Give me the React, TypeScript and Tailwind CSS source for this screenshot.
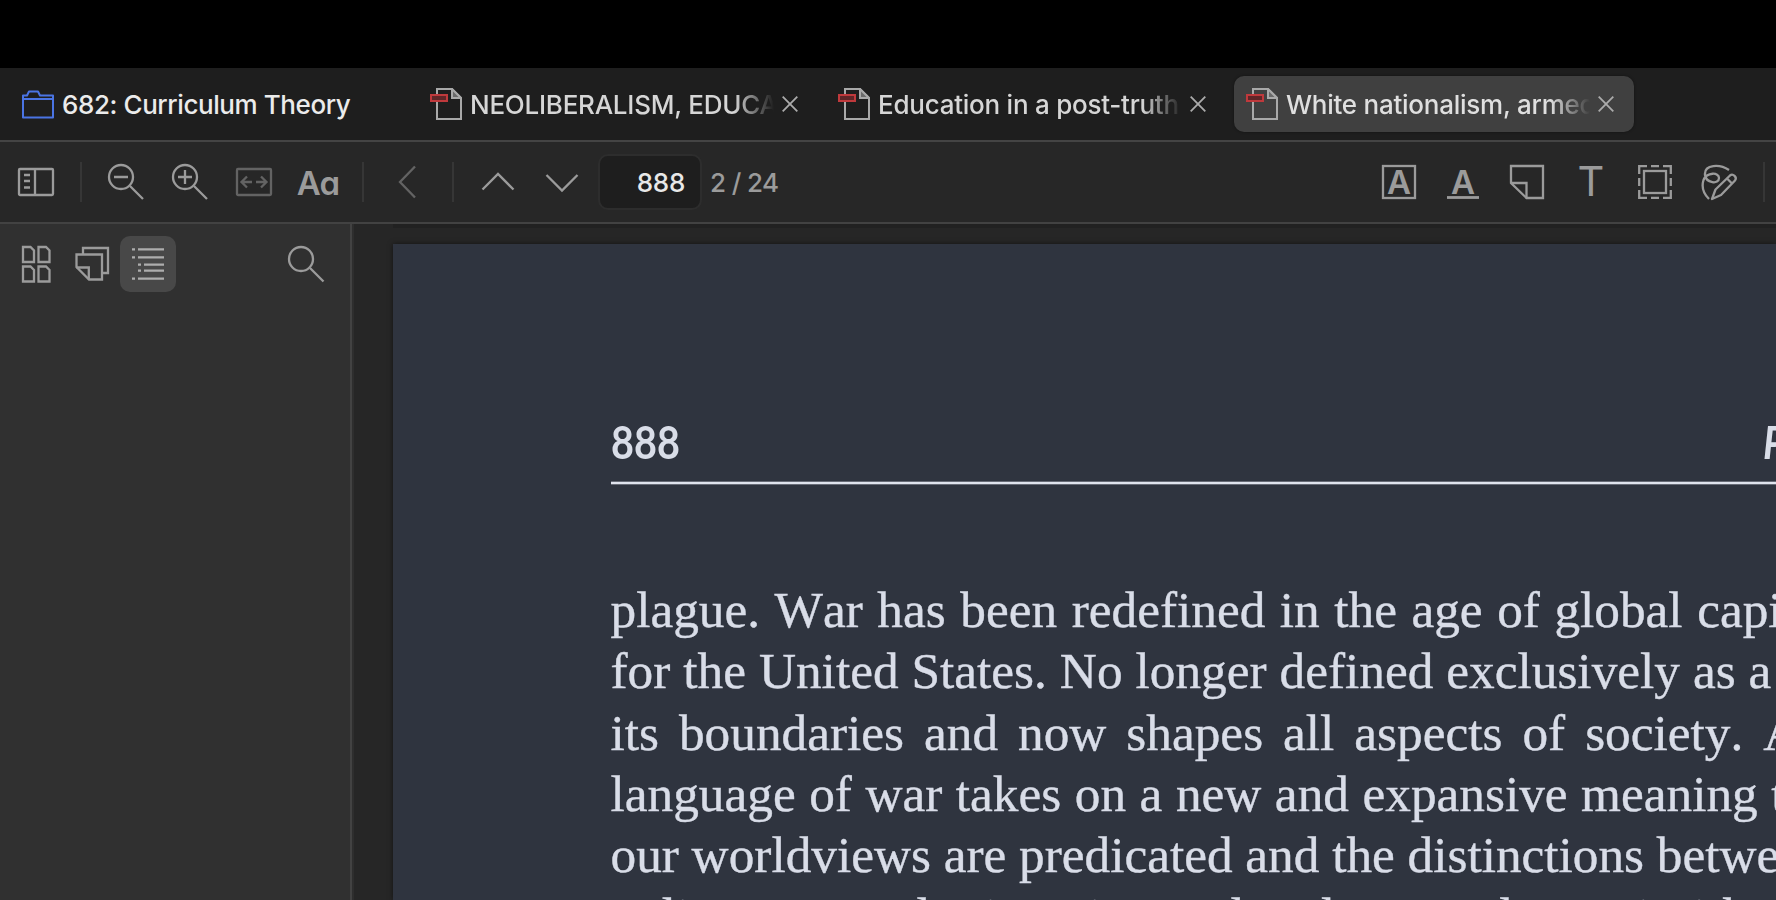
import type { ReactNode } from 'react';

interface IconProps {
  children: ReactNode;
  className?: string;
}

function Icon({ children, className = 'text-[#9b9b9b]' }: IconProps) {
  return (
    <svg
      className={`w-10 h-10 shrink-0 ${className}`}
      viewBox="0 0 40 40"
      fill="none"
      stroke="currentColor"
      strokeWidth="2.3"
    >
      {children}
    </svg>
  );
}

function ToolButton({ label, active, children }: { label: string; active?: boolean; children: ReactNode }) {
  return (
    <button
      aria-label={label}
      className={`w-14 h-14 shrink-0 flex items-center justify-center rounded-[10px] ${active ? 'bg-[#484848]' : ''}`}
    >
      {children}
    </button>
  );
}

function Divider() {
  return <div className="w-0.5 h-10 shrink-0 bg-[#363636]" />;
}

function PdfIcon() {
  return (
    <svg className="w-8 h-8 shrink-0" viewBox="0 0 32 32" fill="none" strokeWidth="2">
      <path d="M7 1h15l9 9v21H7z" stroke="#a9a9a9" />
      <path d="M22 1v9h9z" stroke="#a9a9a9" fill="#6a6a6a" />
      <rect x="1" y="7" width="16" height="6" stroke="#bf393c" fill="#5f2628" />
    </svg>
  );
}

function Tab({ title, active }: { title: string; active?: boolean }) {
  return (
    <div
      className={`w-[400px] h-14 shrink-0 flex items-center pl-3 pr-5 rounded-[10px] ${
        active ? 'bg-[#404040] text-[#dfdfdf] shadow-[0_0_3px_rgba(0,0,0,0.4)]' : 'text-[#d6d6d6]'
      }`}
    >
      <PdfIcon />
      <span className="ml-2 pt-0.5 w-[305px] overflow-hidden whitespace-nowrap tracking-[-0.25px] font-[450] [mask-image:linear-gradient(to_right,black_264px,transparent_304px)]">
        {title}
      </span>
      <svg className="ml-[7px] w-4 h-4 shrink-0" viewBox="0 0 16 16" stroke="#ababab" strokeWidth="1.8">
        <path d="M.7.7l14.6 14.6M15.3.7L.7 15.3" />
      </svg>
    </div>
  );
}

const tabs = [
  { title: 'NEOLIBERALISM, EDUCATION', active: false },
  { title: 'Education in a post-truth world', active: false },
  { title: 'White nationalism, armed culture', active: true },
];

// every line is justified on its own, so each one carries its word spacing
const lines = [
  { text: 'plague. War has been redefined in the age of global capitalism', spacing: '[word-spacing:1.7px]' },
  { text: 'for the United States. No longer defined exclusively as a', spacing: '[word-spacing:0.15px]' },
  { text: 'its boundaries and now shapes all aspects of society. As', spacing: '[word-spacing:7.15px]' },
  { text: 'language of war takes on a new and expansive meaning today', spacing: '[word-spacing:0.7px]' },
  { text: 'our worldviews are predicated and the distinctions between', spacing: '[word-spacing:-0.1px]' },
  { text: 'police, war and crime, internal and external security’ has', spacing: '[word-spacing:1.9px]' },
];

function TabBar() {
  return (
    <div className="h-[74px] shrink-0 flex items-center gap-2 bg-[#1e1e1e] border-b-2 border-[#444444]">
      <div className="w-[410px] shrink-0 flex items-center pl-5 text-[#ebebeb] font-medium">
        <svg className="w-9 h-9 shrink-0" viewBox="0 0 36 36" fill="none" stroke="#4a74e4" strokeWidth="2" strokeLinejoin="round">
          <path d="M3 9.500h4l2-4h9l2 4h13v22H3z" />
          <path d="M3 13h30" />
        </svg>
        <span className="ml-1.5 pt-0.5 whitespace-nowrap tracking-[-0.42px] word-spacing-[1px]">682: Curriculum Theory</span>
      </div>
      {tabs.map((tab) => (
        <Tab key={tab.title} title={tab.title} active={tab.active} />
      ))}
    </div>
  );
}

function Toolbar() {
  return (
    <div className="h-[82px] shrink-0 flex items-center justify-between pl-2 pr-[11px] bg-[#272727] border-b-2 border-[#424242]">
      <div className="flex items-center">
        <div className="flex items-center gap-4">
          <ToolButton label="Toggle sidebar">
            <Icon>
              <rect x="3" y="7" width="34" height="26" rx="1" />
              <path d="M19 7v26M8 13h6M8 19h6M8 25.500h6" />
            </Icon>
          </ToolButton>
          <Divider />
          <div className="flex gap-2">
            <ToolButton label="Zoom out">
              <Icon>
                <circle cx="15" cy="15" r="12" />
                <path d="M24 24l13 13M8 15h14" />
              </Icon>
            </ToolButton>
            <ToolButton label="Zoom in">
              <Icon>
                <circle cx="15" cy="15" r="12" />
                <path d="M24 24l13 13M8 15h14M15 8v14" />
              </Icon>
            </ToolButton>
            <ToolButton label="Fit width">
              <Icon className="text-[#636363]">
                <rect x="3" y="7" width="34" height="26" rx="1" />
                <path d="M18 20H8M13 14.500L7.500 20l5.500 5.500M22 20h10M27 14.500l5.500 5.500-5.500 5.500" />
              </Icon>
            </ToolButton>
            <ToolButton label="Appearance">
              <span className="pt-px text-[33px] leading-10 font-[560] tracking-[-0.8px] text-[#9b9b9b] [font-feature-settings:'cv11']">
                Aa
              </span>
            </ToolButton>
          </div>
          <Divider />
          <ToolButton label="Back">
            <Icon className="text-[#636363]">
              <path d="M27 4.500L12 20l15 15.500" />
            </Icon>
          </ToolButton>
          <Divider />
          <div className="flex gap-2">
            <ToolButton label="Previous page">
              <Icon>
                <path d="M4.500 27.500L20 12l15.500 15.500" />
              </Icon>
            </ToolButton>
            <ToolButton label="Next page">
              <Icon>
                <path d="M4.500 13L20 28.500 35.500 13" />
              </Icon>
            </ToolButton>
          </div>
        </div>
        <div className="ml-2 w-[104px] h-14 flex items-center justify-end pt-px pr-[15px] rounded-[10px] border-2 border-[#2d2d2d] bg-[#1e1e1e] text-[#e8e8e8] font-medium tracking-[-0.3px]">
          888
        </div>
        <span className="ml-2 pt-px text-[#9b9b9b] font-medium tracking-[-0.6px]">2 / 24</span>
      </div>

      <div className="flex items-center gap-4">
        <div className="flex gap-2">
          <ToolButton label="Highlight text">
            <Icon>
              <rect x="4" y="4" width="32" height="32" />
              <text x="20" y="32" textAnchor="middle" fontSize="33" fontWeight="560" fill="currentColor" stroke="none">
                A
              </text>
            </Icon>
          </ToolButton>
          <ToolButton label="Underline text">
            <Icon>
              <text x="20" y="32" textAnchor="middle" fontSize="33" fontWeight="560" fill="currentColor" stroke="none">
                A
              </text>
              <path d="M4 35.500h32" strokeWidth="2.800" />
            </Icon>
          </ToolButton>
          <ToolButton label="Add note">
            <Icon>
              <path d="M4 4h32v32H19.500L4 21z" />
              <path d="M4 21h15.500v15" />
            </Icon>
          </ToolButton>
          <ToolButton label="Add text">
            <Icon>
              <text x="20" y="34" textAnchor="middle" fontSize="41.500" fontWeight="400" fill="currentColor" stroke="none">
                T
              </text>
            </Icon>
          </ToolButton>
          <ToolButton label="Select area">
            <Icon>
              <rect x="9" y="9" width="22" height="22" />
              <path d="M4.200 12V4.200H12M16 4.200h8M28 4.200h7.800V12M35.800 16v8M35.800 28v7.800H28M24 35.800h-8M12 35.800H4.200V28M4.200 24v-8" />
            </Icon>
          </ToolButton>
          <ToolButton label="Draw">
            <Icon>
              <path d="M30 8C21 2 5 2 6 13c1 8 14 10 14 3 0-6-12-6-15.500 2C2 26 5 32 10 37" />
              <path d="M13 37l3.500-9.500L31 13.500c3-2.500 7.500 2 5 5L22 33z" strokeLinejoin="round" />
              <path d="M28 16.500l5 5" />
            </Icon>
          </ToolButton>
        </div>
        <Divider />
      </div>
    </div>
  );
}

function Sidebar() {
  return (
    <div className="w-[352px] shrink-0 flex items-start justify-between pl-2 pr-4 pt-3 bg-[#303030] border-r-2 border-[#424242]">
      <div className="flex">
        <ToolButton label="Thumbnails">
          <Icon>
            <path d="M7 3h7.500L18 6.500V18H7zM22.500 3H30l3.500 3.500V18h-11zM7 22.500h7.500L18 26v11.500H7zM22.500 22.500H30l3.500 3.500v11.500h-11z" />
          </Icon>
        </ToolButton>
        <ToolButton label="Annotations">
          <Icon>
            <path d="M11 10V4h25v25h-6" />
            <path d="M4.500 10.500H30v25H17L4.500 23z" />
            <path d="M4.500 23.500h12.300v12" />
          </Icon>
        </ToolButton>
        <ToolButton label="Outline" active>
          <Icon className="text-[#adadad]">
            <path d="M4 5.300h3M10 5.300h26M4 13.300h3M10 13.300h26M10 20.700h3M16 20.700h20M10 26.700h3M16 26.700h20M4 34.700h3M10 34.700h26" />
          </Icon>
        </ToolButton>
      </div>
      <ToolButton label="Search">
        <Icon>
          <circle cx="15" cy="15" r="12" />
          <path d="M24 24l13.500 13.500" />
        </Icon>
      </ToolButton>
    </div>
  );
}

function Page() {
  return (
    <div className="w-[1383px] h-full pl-[217.5px] pt-[171px] bg-[#2f343f] text-[#d9dde8] shadow-[0_0_5px_rgba(0,0,0,0.5)]">
      <div className="flex h-[54px] overflow-hidden whitespace-nowrap font-['Lato'] font-bold text-[45px] leading-[54px]">
        <div className="w-[1152px] shrink-0">
          <span className="inline-block origin-left scale-x-[0.88]">888</span>
        </div>
        <span className="inline-block origin-left scale-x-[0.88] italic">Policy Futures in Education</span>
      </div>
      <div className="mt-3 h-1 border-y border-[#686c77] bg-[#e0e4ee]" />
      <div className="mt-[94.1px] whitespace-nowrap font-['Liberation_Serif',serif] text-[51.3px] leading-[61.25px] [font-kerning:none] [-webkit-text-stroke:0.4px]">
        {lines.map((line) => (
          <p key={line.text} className={line.spacing}>
            {line.text}
          </p>
        ))}
      </div>
    </div>
  );
}

export default function App() {
  return (
    <div className="w-[1776px] h-[900px] flex flex-col overflow-hidden bg-black pt-[68px] font-['Inter',sans-serif] text-[26px] leading-8">
      <TabBar />
      <Toolbar />
      <div className="flex flex-1 min-h-0">
        <Sidebar />
        <div className="flex-1 min-w-0 flex flex-col gap-4 pl-[41px] bg-[#262626] border-l-2 border-[#2e2e2e] overflow-hidden">
          <div className="h-1 shrink-0 -ml-0.5 bg-[#212121]" />
          <div className="flex-1 min-h-0 -ml-0.5">
            <Page />
          </div>
        </div>
      </div>
    </div>
  );
}
